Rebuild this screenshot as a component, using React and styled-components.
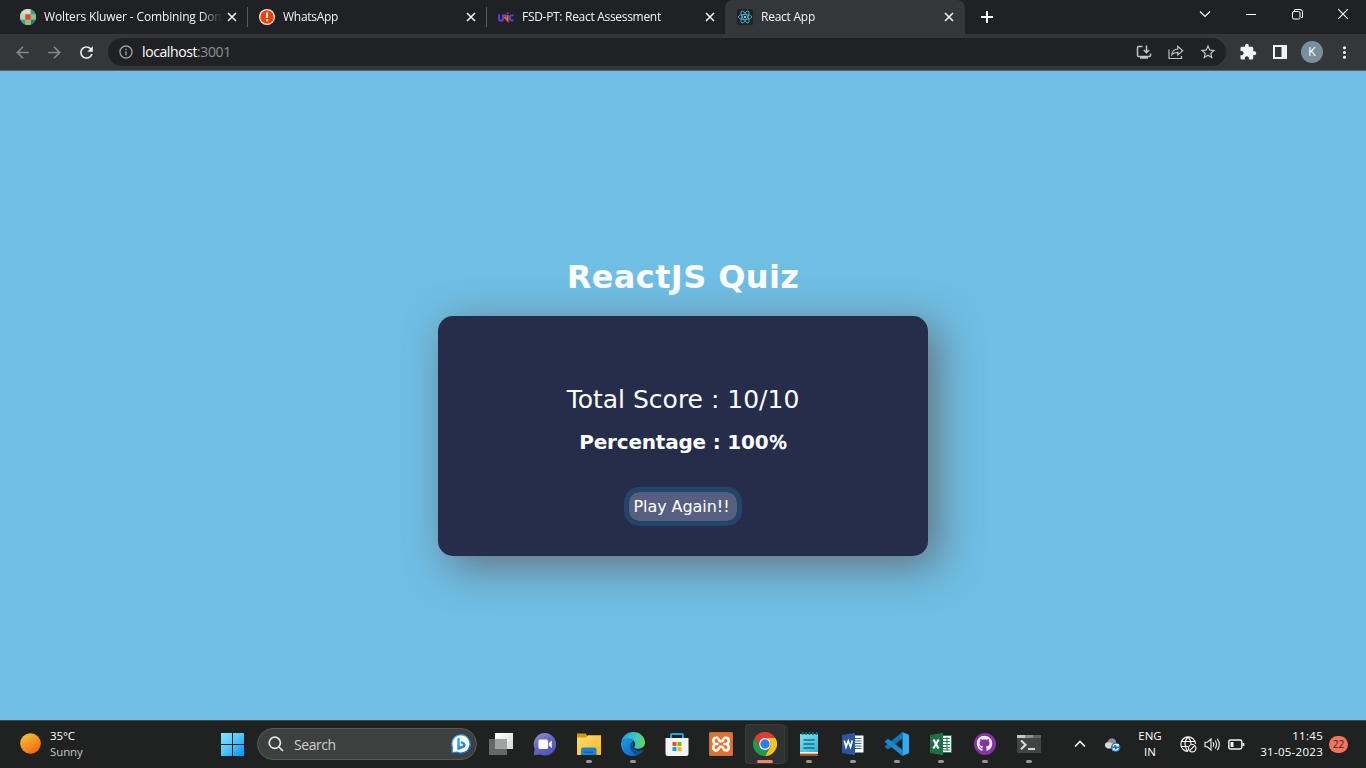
import React from "react";
import styled, { createGlobalStyle } from "styled-components";
import { MdArrowBack, MdArrowForward, MdRefresh, MdInfoOutline, MdStarBorder, MdExtension, MdMoreVert } from "react-icons/md";
import { FaGithub } from "react-icons/fa";

const Global = createGlobalStyle`
  * { box-sizing: border-box; }
  body { margin: 0; overflow: hidden; background: #6fbee4; }
  svg { display: block; flex: none; }
`;

const Screen = styled.div`
  width: 1366px;
  height: 768px;
  display: flex;
  flex-direction: column;
  font-family: "Open Sans", "Noto Sans", sans-serif;
  color: #fff;
`;

/* ---------- browser chrome ---------- */

const TabStrip = styled.div`
  height: 34px;
  flex: none;
  display: flex;
  padding-left: 8px;
  background: #202124;
`;

const Tab = styled.div`
  width: ${(p) => (p.$active ? 240 : 239)}px;
  height: 34px;
  display: flex;
  align-items: center;
  padding: 0 0 0 12px;
  border-radius: 8px 8px 0 0;
  background: ${(p) => (p.$active ? "#35363a" : "transparent")};
`;

const TabLabel = styled.div`
  width: 183px;
  margin-left: 8px;
  overflow: hidden;
  white-space: nowrap;
  font-size: 12px;
  line-height: 18px;
  letter-spacing: ${(p) => p.$track}px;
  color: #f1f3f4;
  mask-image: linear-gradient(90deg, #000 156px, transparent 178px);
`;

const Divider = styled.div`
  width: 1px;
  height: 20px;
  margin: 7px -1px 0 0;
  background: #5b5c60;
`;

const NewTab = styled.div`
  width: 28px;
  height: 34px;
  margin-left: 8px;
  display: grid;
  place-items: center;
`;

const WindowControls = styled.div`
  height: 28px;
  margin-left: auto;
  display: grid;
  grid-template-columns: repeat(4, 46px);
  place-items: center;
`;

const Toolbar = styled.div`
  height: 37px;
  flex: none;
  display: flex;
  align-items: center;
  padding: 0 0 0 13px;
  background: #35363a;
  border-bottom: 1px solid #606165;
`;

const NavButton = styled.div`
  width: 32px;
  color: ${(p) => (p.$on ? "#f1f3f4" : "#85878b")};
`;

const Omnibox = styled.div`
  width: 1118px;
  height: 28px;
  margin-left: -1px;
  padding: 0 9px 0 10px;
  display: flex;
  align-items: center;
  border-radius: 14px;
  background: #202124;
  color: #9aa0a6;
`;

const Url = styled.div`
  flex: 1;
  margin-left: 8px;
  font-size: 14px;
  line-height: 20px;
  letter-spacing: -0.4px;
  color: #8d9196;
  b { font-weight: 400; color: #fff; }
`;

const OmniActions = styled.div`
  display: flex;
  gap: 14px;
  color: #c0c3c7;
`;

const Extensions = styled.div`
  display: flex;
  align-items: center;
  margin-left: 13px;
  color: #f1f3f4;
`;

const PanelIcon = styled.svg`
  margin-left: 16px;
`;

const Avatar = styled.div`
  width: 22px;
  height: 22px;
  margin: 0 12px 0 14px;
  border-radius: 50%;
  background: #78909c;
  text-align: center;
  font: 12px/22px Roboto, sans-serif;
`;

/* ---------- quiz page ---------- */

const Page = styled.main`
  flex: 1;
  display: flex;
  flex-direction: column;
  align-items: center;
  padding-top: 185px;
  background: #6fbee4;
  font-family: "DejaVu Sans", sans-serif;
  white-space: nowrap;
`;

const Title = styled.h1`
  margin: 0;
  height: 60px;
  font-size: 32px;
  line-height: 42px;
  letter-spacing: 0.4px;
`;

const Card = styled.section`
  width: 490px;
  height: 240px;
  padding-top: 68px;
  display: flex;
  flex-direction: column;
  align-items: center;
  border-radius: 15px;
  background: #252d4a;
  box-shadow: 10px 10px 42px 0 rgba(98, 88, 90, 0.75);
`;

const Score = styled.div`
  height: 42px;
  font-size: 25px;
  line-height: 32px;
`;

const Percentage = styled.div`
  height: 61px;
  font-size: 20px;
  line-height: 32px;
  font-weight: 700;
  letter-spacing: -0.2px;
  small { margin-left: 0.5px; font-size: 19px; font-weight: 400; -webkit-text-stroke: 0.7px #fff; }
`;

const PlayAgain = styled.button`
  width: 118px;
  height: 39px;
  padding: 1px 3px 0 0;
  border: 5px solid #24446a;
  border-radius: 15px;
  background: #575f80;
  background-clip: padding-box;
  color: #fff;
  font: 16px/28px "DejaVu Sans", sans-serif;
  letter-spacing: -0.05px;
`;

/* ---------- taskbar ---------- */

const Taskbar = styled.footer`
  height: 48px;
  flex: none;
  display: flex;
  border-top: 1px solid #484742;
  background: #202221;
`;

const Weather = styled.div`
  width: 209px;
  display: flex;
  align-items: center;
  padding: 0 0 1px 20px;
  gap: 9px;
  svg { margin-bottom: 2px; }
`;

const Lines = styled.div`
  font-size: 11.5px;
  line-height: 16px;
  letter-spacing: ${(p) => p.$track || 0}px;
  text-align: ${(p) => p.$align || "left"};
  white-space: nowrap;
  span { color: #c4c5c5; }
`;

const StartButton = styled.div`
  width: 48px;
  padding: 0 2px 2px 0;
  display: grid;
  place-items: center;
`;

const SearchBox = styled.div`
  width: 220px;
  height: 32px;
  margin-top: 7px;
  padding: 0 5px 0 10px;
  display: flex;
  align-items: center;
  border: 1px solid #575957;
  border-radius: 16px;
  background: #3d403f;
  font-size: 14px;
  letter-spacing: -0.45px;
  color: #cfd0d0;
`;

const SearchText = styled.div`
  flex: 1;
  margin-left: 10px;
`;

const Apps = styled.div`
  display: flex;
  margin-left: 2px;
`;

const AppCell = styled.div`
  width: 44px;
  height: 47px;
  padding-top: 11px;
  display: flex;
  flex-direction: column;
  align-items: center;
  gap: 4px;
`;

const ActiveCell = styled(AppCell)`
  width: 40px;
  height: 40px;
  margin: 3px 2px 0 2px;
  padding-top: 8px;
  border-radius: 4px;
  background: #303231;
  box-shadow: 0 0 0 1px #3a3c3b inset, 4px 0 0 -1px #2b2d2c;
`;

const Indicator = styled.div`
  width: ${(p) => (p.$active ? 16 : 6)}px;
  height: 3px;
  flex: none;
  border-radius: 2px;
  background: ${(p) => (p.$active ? "#f4846b" : "#969897")};
`;

const Tray = styled.div`
  flex: 1;
  display: flex;
  align-items: center;
  padding: 0 18px 1px 23px;
`;

const CloudSlot = styled.div`
  margin-left: 17px;
`;

const Connectivity = styled.div`
  display: flex;
  gap: 7px;
  margin: 0 14px 0 17px;
`;

const Language = styled(Lines)`
  width: 26px;
  margin-left: 16px;
`;

const Clock = styled(Lines)`
  width: 64px;
  display: flex;
  flex-direction: column;
  align-items: flex-end;
`;

const Badge = styled.div`
  width: 19px;
  height: 17px;
  margin-left: 6px;
  border-radius: 9px;
  background: #f4735d;
  color: #30201e;
  text-align: center;
  font-size: 10px;
  line-height: 16px;
`;

/* ---------- drawings ---------- */

const Svg = ({ s = 24, box = 24, children, ...rest }) => (
  <svg width={s} height={s} viewBox={`0 0 ${box} ${box}`} fill="none" {...rest}>
    {children}
  </svg>
);

const Cross = ({ s = 10, sw = 1.6 }) => (
  <Svg s={s} box={10} stroke="#f1f3f4" strokeWidth={sw}><path d="M1 1l8 8M9 1l-8 8" /></Svg>
);

const Wolters = () => (
  <Svg s={16} box={16}>
    <clipPath id="round"><circle cx="8" cy="8" r="8" /></clipPath>
    <g clipPath="url(#round)">
      <path fill="#a9d18e" d="M0 0h16v16H0z" />
      <path fill="#cfe3bd" d="M0 0h5.3v5.3H0zM5.3 0h5.400v5.300H5.300z" />
      <path fill="#b5d9a0" d="M0 5.300h5.300v5.400H0z" />
      <path fill="#8fc46a" d="M10.700 5.300H16v5.400h-5.300z" />
      <path fill="#3e8fc7" d="M10.700 0H16v5.300h-5.300zM0 10.700h5.300V16H0z" />
      <path fill="#1f74b5" d="M10.700 10.700H16V16h-5.300z" />
      <path fill="#8ccb5a" d="M5.300 10.700h5.400V16H5.300z" />
      <path fill="#ee3f4b" d="M5.300 5.300h5.400v5.400H5.300z" />
    </g>
  </Svg>
);

const Alert = () => (
  <Svg s={16} box={16}>
    <circle cx="8" cy="8" r="8" fill="#f3f3f3" /><circle cx="8" cy="8" r="6.800" fill="#ff3d00" />
    <path d="M7 3.500h2V9H7zM7 10.300h2v2H7z" fill="#fff" />
  </Svg>
);

const Unik = () => (
  <Svg s={16} box={16} strokeWidth="1.900">
    <path stroke="#5b44e8" d="M1 5.500v4.300q0 2 2 2t2-2V5.500M15.500 6.500c-3-.6-3.800.4-3.800 2.300s.8 3 3.800 2.400" />
    <path stroke="#8a3fb5" d="M5 8c.8-2 2.400-2.200 3.200-.7" />
    <path stroke="#f26522" d="M6.500 7.800L9.600 11.500V6" />
    <circle cx="9.600" cy="4.200" r="1" fill="#6c4bea" />
  </Svg>
);

const ReactLogo = () => (
  <Svg s={16} box={16}>
    <rect width="16" height="16" rx="1" fill="#20232a" />
    <g stroke="#53b9d1" strokeWidth=".8">
      <ellipse cx="8" cy="8" rx="6.700" ry="2.600" />
      <ellipse cx="8" cy="8" rx="6.700" ry="2.600" transform="rotate(60 8 8)" />
      <ellipse cx="8" cy="8" rx="6.700" ry="2.600" transform="rotate(120 8 8)" />
    </g>
    <circle cx="8" cy="8" r="1.200" fill="#61dafb" />
  </Svg>
);

const Install = () => (
  <Svg s={18} box={18} stroke="currentColor" strokeWidth="1.500">
    <path d="M7.500 3.500H3.500Q2.500 3.500 2.500 4.500v8q0 1 1 1h11q1 0 1-1V10.500M11.500 2.500v7M8.800 7l2.700 2.700L14.200 7" />
    <path d="M5 13.700h8v2H5z" fill="currentColor" strokeWidth="0" />
  </Svg>
);

const Share = () => (
  <Svg s={18} box={18} stroke="currentColor" strokeWidth="1.200">
    <path d="M2 6.500v9h12.500V13M4.800 11.700c.3-3.500 2.300-5.500 6-5.700V3.300l4.900 4.400L10.800 12V9.300c-2.800 0-4.500.7-6 2.400z" />
  </Svg>
);

const Sun = () => (
  <Svg s={21} box={21}>
    <linearGradient id="sun" x1="4" y1="2" x2="15" y2="20" gradientUnits="userSpaceOnUse"><stop stopColor="#f7bd32" /><stop offset="1" stopColor="#f26a0e" /></linearGradient>
    <circle cx="10.500" cy="10.500" r="10.300" fill="url(#sun)" />
  </Svg>
);

const WindowsLogo = () => (
  <Svg s={24}>
    <linearGradient id="win" x1="1" y1="1" x2="23" y2="23" gradientUnits="userSpaceOnUse"><stop stopColor="#8be3ff" /><stop offset=".5" stopColor="#4cc8ff" /><stop offset="1" stopColor="#0697ff" /></linearGradient>
    <path fill="url(#win)" d="M1 1h11v11H1zM13 1h11v11H13zM1 13h11v11H1zM13 13h11v11H13z" />
  </Svg>
);

const Bing = () => (
  <Svg s={20} box={20}>
    <linearGradient id="bing" x1="4" y1="0" x2="16" y2="20" gradientUnits="userSpaceOnUse"><stop stopColor="#35c3f3" /><stop offset="1" stopColor="#1563dc" /></linearGradient>
    <path fill="url(#bing)" d="M10 .3a9.700 9.700 0 1 1-4 18.500L.5 19.500.8 13A9.700 9.700 0 0 1 10 .3z" />
    <path fill="#fff" d="M10 1.600a8.400 8.400 0 1 1-3.800 15.900L1.800 18l.4-4.600A8.400 8.400 0 0 1 10 1.600z" />
    <path stroke="url(#bing)" strokeWidth="2.400" strokeLinejoin="round" d="M7.500 4v10.700l5.300-2.300c1.800-2-.4-3.200-2.900-4.300" />
  </Svg>
);

const TaskView = () => (
  <Svg>
    <linearGradient id="tv" x1="8" y1="1" x2="24" y2="17" gradientUnits="userSpaceOnUse"><stop stopColor="#fff" /><stop offset="1" stopColor="#d5d6d6" /></linearGradient>
    <path fill="url(#tv)" d="M6 1h18v16H6z" /><path fill="#666867" d="M0 7h18v16H0z" /><path fill="#a1a3a2" d="M6 7h12v10H6z" />
  </Svg>
);

const Chat = () => (
  <Svg>
    <linearGradient id="chat" x1="4" y1="0" x2="19" y2="23" gradientUnits="userSpaceOnUse"><stop stopColor="#9091cb" /><stop offset=".5" stopColor="#6365c6" /><stop offset="1" stopColor="#5053bd" /></linearGradient>
    <path fill="url(#chat)" d="M12 1a11.300 11.300 0 1 1-5 21.500L.8 23.300 1.700 17A11.300 11.300 0 0 1 12 1z" />
    <rect x="5.500" y="7.500" width="9.500" height="9.500" rx="1.500" fill="#fff" /><path fill="#fff" d="M15.800 11l3-2.500V16l-3-2.500z" />
  </Svg>
);

const Folder = () => (
  <Svg>
    <linearGradient id="fold" x1="2" y1="3" x2="20" y2="23" gradientUnits="userSpaceOnUse"><stop stopColor="#ffdc72" /><stop offset="1" stopColor="#fcbb22" /></linearGradient>
    <path fill="#d99a0b" d="M0 1.500h8.500l2 2.500v4H0z" /><path fill="url(#fold)" d="M0 5.500h8.800L11 3.300h13V23H0z" />
    <path fill="#1785d3" d="M4 23v-5.500q0-2 2-2h11.500q2 0 2 2V23z" /><path fill="#0c5fa8" d="M7.500 19.500h8.500V21H7.500z" />
  </Svg>
);

const Edge = () => (
  <Svg>
    <linearGradient id="ed1" x1="2" y1="6" x2="24" y2="7" gradientUnits="userSpaceOnUse"><stop stopColor="#229fe2" /><stop offset=".55" stopColor="#36c6c9" /><stop offset="1" stopColor="#67d94c" /></linearGradient>
    <linearGradient id="ed2" x1="2" y1="10" x2="14" y2="23" gradientUnits="userSpaceOnUse"><stop stopColor="#1a93df" /><stop offset="1" stopColor="#0c6ccb" /></linearGradient>
    <path fill="#0f4f9c" d="M8 9c-3 5 0 14 7 14.600 4-.7 6.500-2.800 8-6-2.500 1.300-5 1.500-7.300.6C13 17 11.500 14.500 12.500 11z" />
    <path fill="url(#ed2)" d="M0 11C3 6 9 5.500 12.500 9 7.500 11 7.500 20 16 23.300 7 26-.5 20 0 11z" />
    <path fill="url(#ed1)" d="M0 11C1 4 6 0 12 0c7 0 12 5 12 10.500 0 4-3 6.200-7 6.200-3.500 0-4.500-1.200-3.300-2.500C16 11 12 6.700 7.500 6.700 4 6.700 1 8.500 0 11z" />
  </Svg>
);

const Store = () => (
  <Svg>
    <path stroke="#21a5e6" strokeWidth="2" d="M6 7V3Q6 2 7 2h10q1 0 1 1V7" />
    <path fill="#f4f4f4" d="M.5 6h23v15.500q0 2.500-2.500 2.500H3Q.5 24 .5 21.500z" />
    <path fill="#f25022" d="M7.500 10h4v4h-4z" /><path fill="#7fba00" d="M12.500 10h4v4h-4z" /><path fill="#00a4ef" d="M7.500 15h4v4h-4z" /><path fill="#ffb900" d="M12.500 15h4v4h-4z" />
  </Svg>
);

const Xampp = () => (
  <Svg>
    <rect width="24" height="24" rx="1.500" fill="#e9722a" /><rect x=".7" y=".7" width="22.600" height="22.600" rx="1" stroke="#b3704b" />
    <path stroke="#fff" strokeWidth="2.600" strokeLinecap="round" strokeLinejoin="round" d="M8.500 12H7c-3.500 0-3.500-6.200 0-6.500C10 5 9 9.500 12 9.500s2-4.500 5-4c3.500.3 3.500 6.500 0 6.500h-1.500M7 12c-3.500 0-3.500 6.200 0 6.500 3 .5 2-4 5-4s2 4.500 5 4c3.500-.3 3.500-6.500 0-6.500" />
  </Svg>
);

const Chrome = () => (
  <Svg>
    <path fill="#e33b2e" d="M1.600 6A12 12 0 0 1 22.400 6H12a6 6 0 0 0-5.200 9z" />
    <path fill="#fbc116" d="M22.400 6A12 12 0 0 1 12 24l5.200-9A6 6 0 0 0 12 6z" />
    <path fill="#219a4d" d="M1.600 6A12 12 0 0 0 12 24l5.200-9a6 6 0 0 1-10.400 0z" />
    <circle cx="12" cy="12" r="5.900" fill="#fff" /><circle cx="12" cy="12" r="4.700" fill="#2d7be8" />
  </Svg>
);

const Notepad = () => (
  <Svg>
    <linearGradient id="note" x1="2" y1="2" x2="20" y2="22" gradientUnits="userSpaceOnUse"><stop stopColor="#84e3f2" /><stop offset="1" stopColor="#35afd2" /></linearGradient>
    <path fill="#a5521a" d="M3 20h18v4H3z" /><path fill="#eee" d="M3 19h18v2.700H3z" /><path fill="url(#note)" d="M3 2h18v18H3z" />
    <path stroke="#11708f" strokeWidth="1.500" d="M6.500 8h11M6.500 12h11M6.500 16h11M5.500 0v3M9 0v3M12.500 0v3M16 0v3M19.500 0v3" />
  </Svg>
);

const Office = ({ dark, light, letter, excel }) => (
  <Svg>
    <path fill="#fff" stroke={excel ? light : "none"} d="M12 3.500h10.500v17H12z" />
    <path stroke={light} strokeWidth="1.100" d={excel ? "M14 6.500h7M14 9.500h7M14 12.500h7M14 15.500h7M14 18h7M18 5v14" : "M14 6.500h6.500M14 9h6.500M14 11.500h6.500M14 14h6.500M14 16.500h6.500"} />
    <path fill={dark} d="M1 3L14 0.700v22.600L1 21z" />
    <path stroke="#fff" strokeWidth={excel ? 2.2 : 1.7} d={letter} />
  </Svg>
);

const VsCode = () => (
  <Svg>
    <path fill="#0f78bd" d="M17.500 0v6.500L3 17.500 0 15.200V14z" />
    <path fill="#168cd0" d="M0 9.200L3 6.800l14.500 11V24L0 10z" />
    <path fill="#30aaf2" d="M17.500 0L24 3v18l-6.500 3z" />
  </Svg>
);

const GitHub = () => (
  <Svg>
    <circle cx="12" cy="12" r="11" fill="#8136a5" /><FaGithub x="3.500" y="3.500" width="17" height="17" color="#f3e7f7" />
  </Svg>
);

const Terminal = () => (
  <Svg>
    <path fill="#434545" d="M0 4h24v17H0z" /><path fill="#c8c9c9" d="M0 3h8v3H0z" /><path fill="#8d8f8f" d="M8 3h8v3H8z" /><path fill="#626464" d="M16 3h8v3h-8z" />
    <path stroke="#d7d8d8" strokeWidth="2.200" d="M4 8.500l4.500 4.300L4 17.200M11 17h7" />
  </Svg>
);

const Cloud = () => (
  <Svg s={18} box={18}>
    <path fill="#8d8f90" d="M4.500 7a4.500 4.500 0 0 1 8.500-1v5H4z" /><path fill="#d5d7d8" d="M4.500 13.500a3.200 3.200 0 0 1 0-6.300c4-.5 4 2 9.500 1.300l1 5z" />
    <circle cx="12.700" cy="12.200" r="4.700" fill="#1373cd" /><path stroke="#fff" strokeWidth="1.200" d="M10 11.500a2.800 2.800 0 0 1 5-1M15.400 13a2.800 2.800 0 0 1-5 1M15.200 9v1.800h-1.800M10.200 15.400v-1.700H12" />
  </Svg>
);

const Globe = () => (
  <Svg s={17} box={17} stroke="#f2f2f2" strokeWidth="1.200">
    <path d="M8 15.500A7.300 7.300 0 1 1 15.500 8M1.500 5.500h13M1.500 10.500H8M8 15.500C4 11 4 5 8 1c2 2 3 4.500 3 7" />
    <circle cx="12.200" cy="12.200" r="3.700" /><path d="M9.700 14.700l5-5" />
  </Svg>
);

const Speaker = () => (
  <Svg s={17} box={17} stroke="#f2f2f2" strokeWidth="1.100">
    <path d="M1 6.200h2.300L7 3v11l-3.700-3.200H1zM9 6.200q1.400 2.300 0 4.600M11.200 4.500q2.600 4 0 8M13.300 2.700q4 5.800 0 11.600" />
  </Svg>
);

const Battery = () => (
  <Svg s={17} box={17}>
    <rect x=".8" y="4" width="13" height="9" rx="1.700" stroke="#f2f2f2" strokeWidth="1.400" /><path fill="#f2f2f2" d="M2.500 6h3v5h-3zM14.500 7h1.800v3h-1.800z" />
  </Svg>
);

const tabs = [
  { title: "Wolters Kluwer - Combining Dom", icon: <Wolters />, track: -0.14 },
  { title: "WhatsApp", icon: <Alert />, track: -0.28 },
  { title: "FSD-PT: React Assessment", icon: <Unik />, track: -0.3 },
  { title: "React App", icon: <ReactLogo />, track: -0.24, active: true },
];

const apps = [
  { icon: <TaskView /> },
  { icon: <Chat /> },
  { icon: <Folder />, open: true },
  { icon: <Edge />, open: true },
  { icon: <Store /> },
  { icon: <Xampp /> },
  { icon: <Chrome />, active: true },
  { icon: <Notepad />, open: true },
  { icon: <Office dark="#2856a0" light="#2b66b5" letter="M3.300 8.500L5 15l2.300-6L9.500 15 11.300 8.500" />, open: true },
  { icon: <VsCode />, open: true },
  { icon: <Office excel dark="#1d7044" light="#23824f" letter="M4.500 7.500l5 9M9.700 7.500l-5.300 9" />, open: true },
  { icon: <GitHub />, open: true },
  { icon: <Terminal />, open: true },
];

export default function App() {
  return (
    <Screen>
      <Global />
      <TabStrip>
        {tabs.map((t, i) => (
          <React.Fragment key={t.title}>
            <Tab $active={t.active}>
              {t.icon}
              <TabLabel $track={t.track}>{t.title}</TabLabel>
              <Cross />
            </Tab>
            {i < 2 && <Divider />}
          </React.Fragment>
        ))}
        <NewTab>
          <Svg s={12} box={12} stroke="#fff" strokeWidth="2"><path d="M6 0v12M0 6h12" /></Svg>
        </NewTab>
        <WindowControls>
          <Svg s={12} box={12} stroke="#fff" strokeWidth="1.100"><path d="M1 3.500l5 5 5-5" /></Svg>
          <Svg s={10} box={10} stroke="#fff"><path d="M0 5.500h10" /></Svg>
          <Svg s={11} box={11} stroke="#fff"><rect x=".5" y="2.500" width="7.500" height="7.500" rx="1.500" /><path d="M2.500 2V.5H8Q10.500.5 10.500 3v5.500H9" /></Svg>
          <Cross s={12} sw={1} />
        </WindowControls>
      </TabStrip>
      <Toolbar>
        <NavButton><MdArrowBack size={19} /></NavButton>
        <NavButton><MdArrowForward size={19} /></NavButton>
        <NavButton $on><MdRefresh size={19} /></NavButton>
        <Omnibox>
          <MdInfoOutline size={16} />
          <Url><b>localhost</b>:3001</Url>
          <OmniActions><Install /><Share /><MdStarBorder size={18} /></OmniActions>
        </Omnibox>
        <Extensions>
          <MdExtension size={18} />
          <PanelIcon width="14" height="14" viewBox="0 0 14 14" fill="none">
            <path stroke="#f1f3f4" strokeWidth="2" d="M1 1h12v12H1z" /><path fill="#f1f3f4" d="M8.500 1H14v12H8.500z" />
          </PanelIcon>
          <Avatar>K</Avatar>
          <MdMoreVert size={19} />
        </Extensions>
      </Toolbar>

      <Page>
        <Title>ReactJS Quiz</Title>
        <Card>
          <Score>Total Score : 10/10</Score>
          <Percentage>Percentage : 100<small>%</small></Percentage>
          <PlayAgain>Play Again!!</PlayAgain>
        </Card>
      </Page>

      <Taskbar>
        <Weather>
          <Sun />
          <Lines $track={-0.1}>35°C<br /><span>Sunny</span></Lines>
        </Weather>
        <StartButton><WindowsLogo /></StartButton>
        <SearchBox>
          <Svg s={16} box={16} stroke="#e5e5e5" strokeWidth="1.700"><circle cx="6.800" cy="6.800" r="5.600" /><path d="M11 11l4 4" /></Svg>
          <SearchText>Search</SearchText>
          <Bing />
        </SearchBox>
        <Apps>
          {apps.map((a, i) =>
            a.active ? (
              <ActiveCell key={i}>{a.icon}<Indicator $active /></ActiveCell>
            ) : (
              <AppCell key={i}>{a.icon}{a.open && <Indicator />}</AppCell>
            )
          )}
        </Apps>
        <Tray>
          <Svg s={12} box={12} stroke="#f2f2f2" strokeWidth="1.600"><path d="M1 8.500l5-5 5 5" /></Svg>
          <CloudSlot><Cloud /></CloudSlot>
          <Language $align="center">ENG<br />IN</Language>
          <Connectivity><Globe /><Speaker /><Battery /></Connectivity>
          <Clock $track={0.28}><div>11:45</div><div>31-05-2023</div></Clock>
          <Badge>22</Badge>
        </Tray>
      </Taskbar>
    </Screen>
  );
}
